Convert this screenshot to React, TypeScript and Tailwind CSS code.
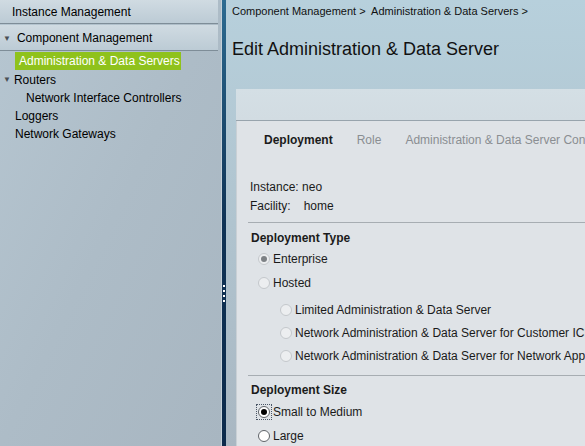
import React from "react";

const FONT = { fontFamily: '"Liberation Sans", Arial, sans-serif' };

function Radio({ checked, disabled, focus }: { checked?: boolean; disabled?: boolean; focus?: boolean }) {
  return (
    <span
      className={`inline-flex items-center justify-center w-[14px] h-[14px] ${
        focus ? "outline outline-1 outline-dotted outline-gray-600" : ""
      }`}
    >
      <span
        className={`flex items-center justify-center w-[12px] h-[12px] rounded-full border ${
          disabled ? "border-[#c4c8cc] bg-[#eceef0]" : "border-[#5f6368] bg-white"
        }`}
      >
        {checked && (
          <span className={`w-[6px] h-[6px] rounded-full ${disabled ? "bg-[#7d8185]" : "bg-black"}`} />
        )}
      </span>
    </span>
  );
}

function Option({
  label,
  checked,
  disabled,
  focus,
  indent,
  tight,
}: {
  label: string;
  checked?: boolean;
  disabled?: boolean;
  focus?: boolean;
  indent?: boolean;
  tight?: boolean;
}) {
  return (
    <div
      className={`flex items-center gap-[2px] whitespace-nowrap ${tight ? "h-[23px]" : "h-[24px]"} ${
        indent ? "pl-[42px]" : "pl-[20px]"
      }`}
    >
      <Radio checked={checked} disabled={disabled} focus={focus} />
      <span className="text-[12px] text-[#1a1a1a]">{label}</span>
    </div>
  );
}

export default function App() {
  return (
    <div className="w-[585px] h-[446px] flex overflow-hidden text-black" style={FONT}>
      {/* Left nav */}
      <aside className="w-[222px] shrink-0 bg-gradient-to-br from-[#b6c6d1] via-[#adbcc7] to-[#a8b6c1] border-r border-[#c5d1d9] text-[12px]">
        <div className="h-[24px] flex items-center pl-[12px] bg-gradient-to-b from-[#d0dbe2] to-[#bccbd5] border-b border-[#7e8d98] mr-[3px]">
          Instance Management
        </div>
        <div className="h-[26px] mt-[1px] flex items-center pl-[3px] bg-gradient-to-b from-[#d0dbe2] to-[#bccbd5] border-b border-[#7e8d98] mr-[3px]">
          <span className="text-[8px] text-[#4a4f55] mr-[6px] mt-[3px]">▼</span>
          Component Management
        </div>
        <div className="mt-[1px]">
          <div className="ml-[15px] w-[166px] h-[18px] flex items-center pl-[4px] bg-[#8fc21c] text-white">
            Administration &amp; Data Servers
          </div>
          <div className="h-[19px] flex items-center pl-[3px]">
            <span className="text-[8px] text-[#4a4f55] mr-[3px]">▼</span>
            Routers
          </div>
          <div className="h-[18px] flex items-center pl-[26px]">Network Interface Controllers</div>
          <div className="h-[18px] flex items-center pl-[15px]">Loggers</div>
          <div className="h-[18px] flex items-center pl-[15px]">Network Gateways</div>
        </div>
      </aside>

      {/* Splitter */}
      <div className="w-[4px] shrink-0 bg-gradient-to-b from-[#2d6b91] via-[#0f3355] to-[#0c2a4b] flex flex-col items-center gap-[3px] pt-[285px]">
        {[0, 1, 2, 3].map((i) => (
          <span key={i} className="w-[2px] h-[2px] bg-white" />
        ))}
      </div>

      {/* Right content */}
      <main className="flex-1 min-w-0 bg-gradient-to-b from-[#b7d0dc] via-[#b0c4cf] to-[#a9b7c2] pl-[6px]">
        <div className="h-[22px] flex items-center text-[11px] text-[#111] whitespace-nowrap">
          Component Management &gt;&nbsp; Administration &amp; Data Servers &gt;
        </div>
        <h1 className="mt-[16px] text-[18px] leading-[22px] text-[#111] whitespace-nowrap">
          Edit Administration &amp; Data Server
        </h1>

        <div className="ml-[4px] mt-[29px] w-[420px]">
          <div className="h-[32px] bg-gradient-to-b from-[#d4dfe5] to-[#d2dce2] border-b border-[#98a4ad]" />
          <div className="bg-[#dfe3e7] border-l border-[#c9d0d5] h-[330px] overflow-hidden">
            <div className="h-[37px] flex items-center text-[12px] whitespace-nowrap pl-[27px]">
              <span className="font-bold text-[#1b1b1b]">Deployment</span>
              <span className="ml-[24px] text-[#8a8e92]">Role</span>
              <span className="ml-[24px] text-[#8a8e92]">Administration &amp; Data Server Configuration</span>
            </div>

            <div className="pl-[13px] pt-[19px] text-[12px] text-[#1a1a1a]">
              <div className="h-[19px] flex items-center">Instance: neo</div>
              <div className="h-[19px] flex items-center">
                Facility:<span className="ml-[13px]">home</span>
              </div>
            </div>

            <div className="ml-[11px] mt-[7px] border-t border-[#a7adb2]" />

            <div className="pl-[14px] pt-[7px] h-[22px] flex items-center text-[12px] font-bold text-[#1b1b1b]">
              Deployment Type
            </div>
            <div className="h-[2px]" />
            <Option label="Enterprise" checked disabled />
            <Option label="Hosted" disabled />
            <div className="h-[3px]" />
            <Option label="Limited Administration & Data Server" disabled indent tight />
            <Option label="Network Administration & Data Server for Customer ICM" disabled indent tight />
            <Option label="Network Administration & Data Server for Network Applications" disabled indent tight />

            <div className="ml-[11px] mt-[8px] border-t border-[#a7adb2]" />

            <div className="pl-[14px] pt-[3px] h-[24px] flex items-center text-[12px] font-bold text-[#1b1b1b]">
              Deployment Size
            </div>
            <Option label="Small to Medium" checked focus />
            <Option label="Large" />
          </div>
        </div>
      </main>
    </div>
  );
}
